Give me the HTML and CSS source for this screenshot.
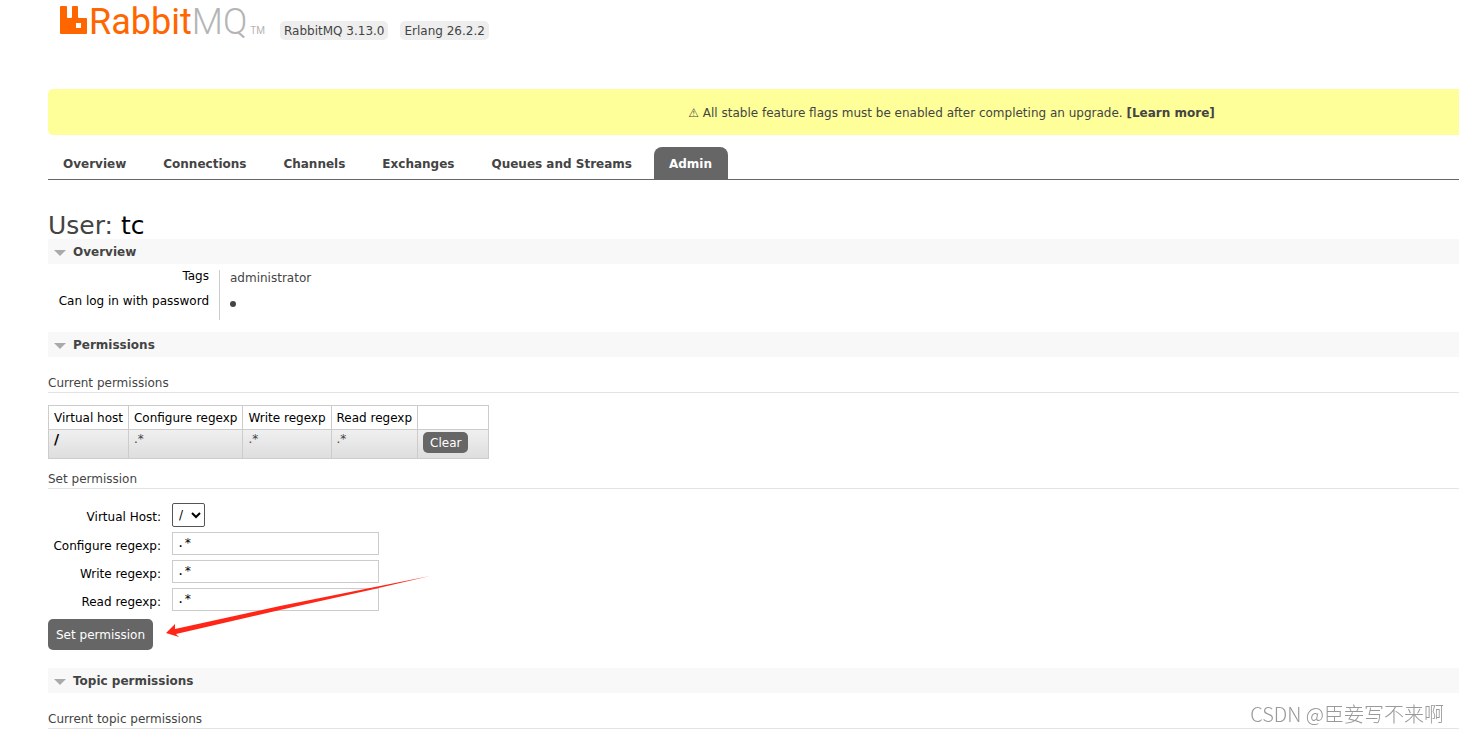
FILE: index.html
```html
<!DOCTYPE html>
<html lang="en">
<head>
<meta charset="utf-8">
<title>RabbitMQ Management</title>
<link rel="stylesheet" href="styles.css">
</head>
<body>
<header class="top">
  <a class="logo" href="#">
    <svg class="logo-mark" viewBox="0 0 27 29" width="27" height="29" aria-hidden="true"><path fill="#f60" fill-rule="evenodd" d="M1 0h5q1 0 1 1v10q0 1 1 1h3q1 0 1-1V1q0-1 1-1h4q1 0 1 1v10q0 1 1 1h7q1 0 1 1v14q0 1-1 1H1q-1 0-1-1V1q0-1 1-1zM16 17v5h5v-5z"/></svg>
    <span class="logo-name">Rabbit<span class="logo-mq">MQ</span></span><span class="logo-tm">TM</span>
  </a>
  <span class="version">RabbitMQ 3.13.0</span>
  <span class="version">Erlang 26.2.2</span>
</header>
<main class="page">
  <p class="warning">⚠ All stable feature flags must be enabled after completing an upgrade. <a href="#">[Learn more]</a></p>
  <nav class="tabs">
    <a href="#">Overview</a>
    <a href="#">Connections</a>
    <a href="#">Channels</a>
    <a href="#">Exchanges</a>
    <a href="#">Queues and Streams</a>
    <a class="selected" href="#">Admin</a>
  </nav>
  <h1>User: <b>tc</b></h1>

  <section>
    <h2>Overview</h2>
    <table class="facts">
      <tr><th scope="row">Tags</th><td>administrator</td></tr>
      <tr><th scope="row">Can log in with password</th><td><span class="dot"></span></td></tr>
    </table>
  </section>

  <section class="permissions">
    <h2>Permissions</h2>
    <h3>Current permissions</h3>
    <table class="list">
      <thead><tr><th>Virtual host</th><th>Configure regexp</th><th>Write regexp</th><th>Read regexp</th><th class="action"></th></tr></thead>
      <tbody><tr><td><a href="#">/</a></td><td>.*</td><td>.*</td><td>.*</td><td class="action"><button class="small" type="button">Clear</button></td></tr></tbody>
    </table>
    <h3 class="set">Set permission</h3>
    <form>
      <div class="fields">
        <label for="vhost">Virtual Host:</label>
        <select id="vhost"><option>/</option></select>
        <label for="configure">Configure regexp:</label>
        <input id="configure" type="text" value=".*">
        <label for="write">Write regexp:</label>
        <input id="write" type="text" value=".*">
        <label for="read">Read regexp:</label>
        <input id="read" type="text" value=".*">
      </div>
      <button type="submit">Set permission</button>
    </form>
    <svg class="arrow" viewBox="0 0 264 62" width="264" height="62" aria-hidden="true"><path fill="#ff2617" d="M0 57L9 48L9 53L114 30L204 12L264 0L204 14L114 34L10 58L13 61z"/></svg>
  </section>

  <section>
    <h2>Topic permissions</h2>
    <h3>Current topic permissions</h3>
  </section>
</main>
<div class="watermark">CSDN @臣妾写不来啊</div>
</body>
</html>
```
FILE: styles.css
```css
body {
  margin: 0;
  background: #fff;
  color: #444;
  font: 12px/15px "DejaVu Sans", Verdana, sans-serif;
}
a { color: inherit; text-decoration: none; }

.top {
  display: flex;
  align-items: flex-end;
  gap: 12px;
  height: 40px;
  padding-left: 60px;
}
.logo {
  display: flex;
  align-items: flex-start;
  align-self: flex-start;
  width: 208px;
  padding-top: 6px;
  font-family: Roboto, sans-serif;
}
.logo-mark { flex: none; margin-right: 2px; }
.logo-name { color: #f60; font-size: 36px; font-weight: 400; line-height: 32px; }
.logo-mq { color: #b5b5b5; font-weight: 300; }
.logo-tm { margin: 17px 0 0 3px; color: #b5b5b5; font-size: 10px; }
.version { padding: 3px 4px 1px; border-radius: 5px; background: #eee; }

.page { padding: 49px 0 0 48px; }
.warning {
  margin: 0 0 12px;
  padding: 17px 0 14px 396px;
  border-radius: 5px 0 0 5px;
  background: #ff9;
  text-align: center;
}
.warning a { font-weight: bold; }

.tabs {
  display: flex;
  gap: 6px;
  border-bottom: 1px solid #666;
  font-weight: bold;
}
.tabs a { padding: 10px 16px 7px 15px; }
.tabs .selected {
  border-radius: 8px 8px 0 0;
  background: #666;
  color: #fff;
}

h1 { margin: 32px 0 0; font-size: 25px; font-weight: normal; line-height: 27px; }
h1 b { color: #000; font-weight: normal; }
h2 {
  display: flex;
  align-items: center;
  gap: 7px;
  margin: 0;
  padding: 6px 6px 4px;
  background: #f8f8f8;
  font-size: 12px;
}
h2::before {
  border: 6px solid transparent;
  border-top-color: #aaa;
  border-bottom: 0;
  content: "";
}
h3 {
  margin: 18px 0 12px;
  border-bottom: 1px solid #e4e4e4;
  font-size: 12px;
  font-weight: normal;
  line-height: 17px;
}

table { border-collapse: collapse; }
th { color: #000; font-weight: normal; }
.facts { margin: 6px 0 12px; }
.facts th { width: 161px; padding: 0 10px 0 0; border-right: 1px solid #ccc; text-align: right; vertical-align: top; line-height: 12px; }
.facts td { height: 24px; padding: 1px 10px 0; vertical-align: top; }
.dot { display: block; width: 6px; height: 6px; margin-top: 5px; border-radius: 50%; background: #444; }

.list th, .list td { padding: 5px 5px 3px; border: 1px solid #ccc; text-align: left; vertical-align: top; }
.list td { padding-top: 2px; padding-bottom: 5px; }
.list tbody tr { background: linear-gradient(#f0f0f0, #ddd); }
.list td a { color: #000; font-size: 14px; font-weight: bold; }
.list .action { width: 60px; }

button {
  padding: 9px 8px 7px;
  border: 0;
  border-radius: 5px;
  background: #666;
  color: #fff;
  font: inherit;
}
.small { display: block; padding: 4px 7px 2px; }

.permissions { position: relative; margin-bottom: 18px; }
.set { margin: 12px 0 14px; }
.fields {
  display: grid;
  grid-template-columns: 113px 207px;
  grid-template-rows: 24px 23px 23px 23px;
  gap: 5px 11px;
  margin-bottom: 8px;
}
label { color: #000; text-align: right; line-height: 28px; }
input, select { box-sizing: border-box; background: #fff; color: #000; }
input { width: 100%; padding: 4px; border: 1px solid #ccc; font: 12px/15px "DejaVu Sans Mono", monospace; }
select { width: 33px; padding: 0 2px; border: 1px solid #555; border-radius: 2px; font: 12px "DejaVu Sans", sans-serif; }
.arrow { position: absolute; left: 118px; top: 244px; }

.watermark {
  position: fixed;
  right: 15px;
  bottom: 7px;
  color: #999;
  font: 300 20px/26px "Noto Sans CJK SC", sans-serif;
}
```
